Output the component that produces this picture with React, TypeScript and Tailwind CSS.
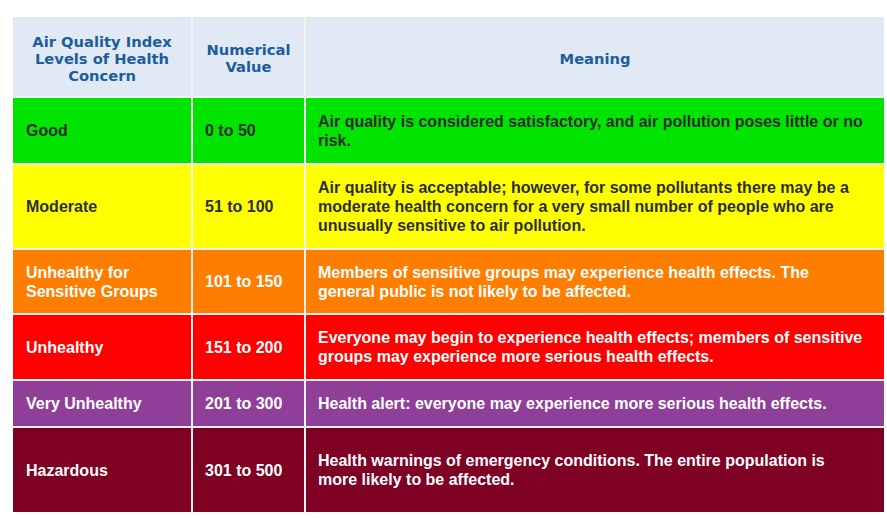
const rows = [
  {
    level: 'Good',
    range: '0 to 50',
    meaning: 'Air quality is considered satisfactory, and air pollution poses little or no risk.',
    bg: 'bg-[#00e400]',
    text: 'text-[#2d2d2d]',
    h: 'h-[65px]',
  },
  {
    level: 'Moderate',
    range: '51 to 100',
    meaning:
      'Air quality is acceptable; however, for some pollutants there may be a moderate health concern for a very small number of people who are unusually sensitive to air pollution.',
    bg: 'bg-[#ffff00]',
    text: 'text-[#2d2d2d]',
    h: 'h-[83px]',
  },
  {
    level: 'Unhealthy for Sensitive Groups',
    range: '101 to 150',
    meaning: 'Members of sensitive groups may experience health effects. The general public is not likely to be affected.',
    bg: 'bg-[#ff7e00]',
    text: 'text-white',
    h: 'h-[63px]',
  },
  {
    level: 'Unhealthy',
    range: '151 to 200',
    meaning: 'Everyone may begin to experience health effects; members of sensitive groups may experience more serious health effects.',
    bg: 'bg-[#ff0000]',
    text: 'text-white',
    h: 'h-[64px]',
  },
  {
    level: 'Very Unhealthy',
    range: '201 to 300',
    meaning: 'Health alert: everyone may experience more serious health effects.',
    bg: 'bg-[#8f3f97]',
    text: 'text-white',
    h: 'h-[45px]',
  },
  {
    level: 'Hazardous',
    range: '301 to 500',
    meaning: 'Health warnings of emergency conditions. The entire population is more likely to be affected.',
    bg: 'bg-[#7e0023]',
    text: 'text-white',
    h: 'h-[84px]',
  },
];

const App = () => {
  return (
    <div className="w-[887px] h-[518px] bg-white pt-[17px] pl-[13px]">
      <div className="w-[871px] grid grid-cols-[178px_111px_578px] gap-[2px] bg-[#f3f3f3]">
        {/* header */}
        <div className="h-[79px] bg-[#e1eaf4] flex items-center justify-center px-2 pt-[4px] text-center font-['DejaVu_Sans',Verdana,sans-serif] font-bold text-[14.7px] leading-[17px] text-[#1c5d9e]">
          Air Quality Index Levels of Health Concern
        </div>
        <div className="h-[79px] bg-[#e1eaf4] flex items-center justify-center px-2 pt-[2px] text-center font-['DejaVu_Sans',Verdana,sans-serif] font-bold text-[14.7px] leading-[17px] text-[#1c5d9e]">
          Numerical Value
        </div>
        <div className="h-[79px] bg-[#e1eaf4] flex items-center justify-center pt-[3px] text-center font-['DejaVu_Sans',Verdana,sans-serif] font-bold text-[14.7px] leading-[17px] text-[#1c5d9e]">
          Meaning
        </div>

        {rows.map((r) => (
          <div key={r.level} className="contents">
            <div className={`${r.h} ${r.bg} ${r.text} flex items-center pl-[13px] pr-2 font-['Liberation_Sans',Arial,sans-serif] font-bold text-[16px] leading-[19px]`}>
              {r.level}
            </div>
            <div className={`${r.h} ${r.bg} ${r.text} flex items-center pl-[12px] font-['Liberation_Sans',Arial,sans-serif] font-bold text-[16px] leading-[19px]`}>
              {r.range}
            </div>
            <div className={`${r.h} ${r.bg} ${r.text} flex items-center pl-[12px] pr-[16px] font-['Liberation_Sans',Arial,sans-serif] font-bold text-[16px] leading-[19px]`}>
              {r.meaning}
            </div>
          </div>
        ))}
      </div>
    </div>
  );
};

export default App;
